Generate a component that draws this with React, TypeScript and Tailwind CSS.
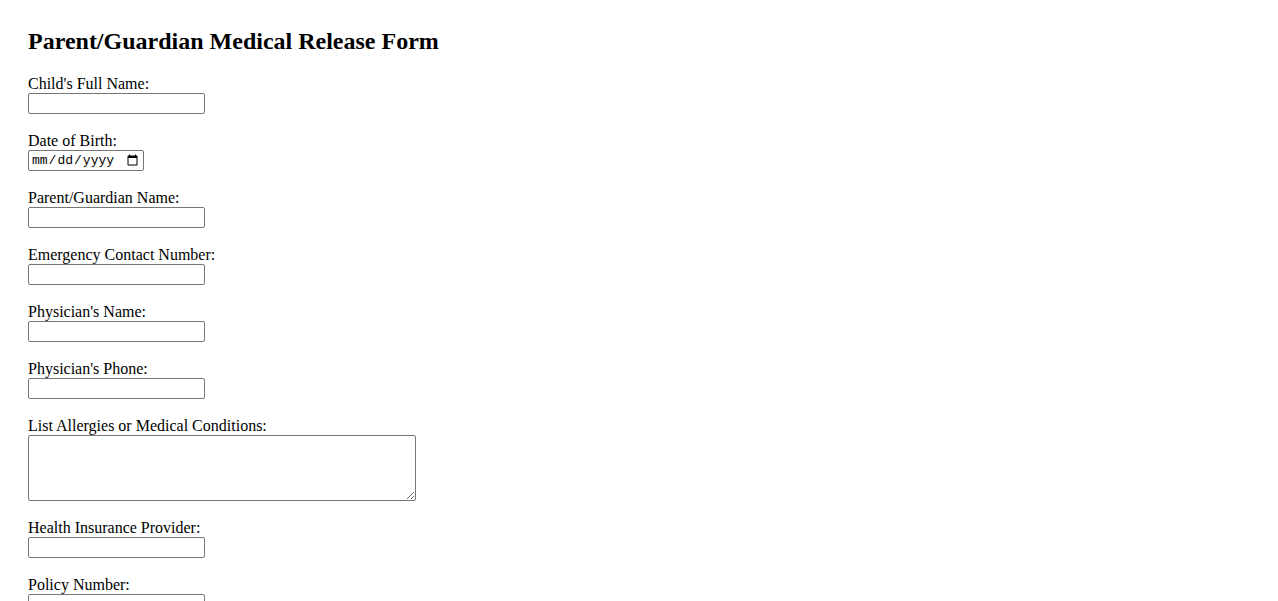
const fields = [
  { label: "Child's Full Name:", type: "text" },
  { label: "Date of Birth:", type: "date" },
  { label: "Parent/Guardian Name:", type: "text" },
  { label: "Emergency Contact Number:", type: "tel" },
  { label: "Physician's Name:", type: "text" },
  { label: "Physician's Phone:", type: "tel" },
  { label: "List Allergies or Medical Conditions:", type: "textarea" },
  { label: "Health Insurance Provider:", type: "text" },
  { label: "Policy Number:", type: "text" },
]

export default function App() {
  return (
    <div className="min-h-screen bg-white px-[28px] pb-[40px] text-black font-['Liberation_Serif',serif]">
      <h2 className="pt-[27px] text-[24px] font-bold leading-[28px]">Parent/Guardian Medical Release Form</h2>
      <form className="mt-[19px] flex flex-col gap-[17px]">
        {fields.map((f) => (
          <div key={f.label} className="flex flex-col items-start">
            <label className="block h-[19px] text-[16px] leading-[19px]">{f.label}</label>
            {f.type === "textarea" ? (
              <textarea className="block h-[66px] w-[388px] rounded-[2px] border border-[#767676] bg-white p-[2px] font-mono text-[13px]" />
            ) : f.type === "date" ? (
              <input
                type="date"
                className="block h-[21px] w-[116px] rounded-[2px] border border-[#767676] bg-white px-[2px] font-['Liberation_Mono',monospace] text-[13px] leading-[15px]"
              />
            ) : (
              <input
                type={f.type}
                className="block h-[21px] w-[177px] rounded-[2px] border border-[#767676] bg-white px-[2px] text-[13px]"
              />
            )}
          </div>
        ))}
      </form>
    </div>
  )
}
